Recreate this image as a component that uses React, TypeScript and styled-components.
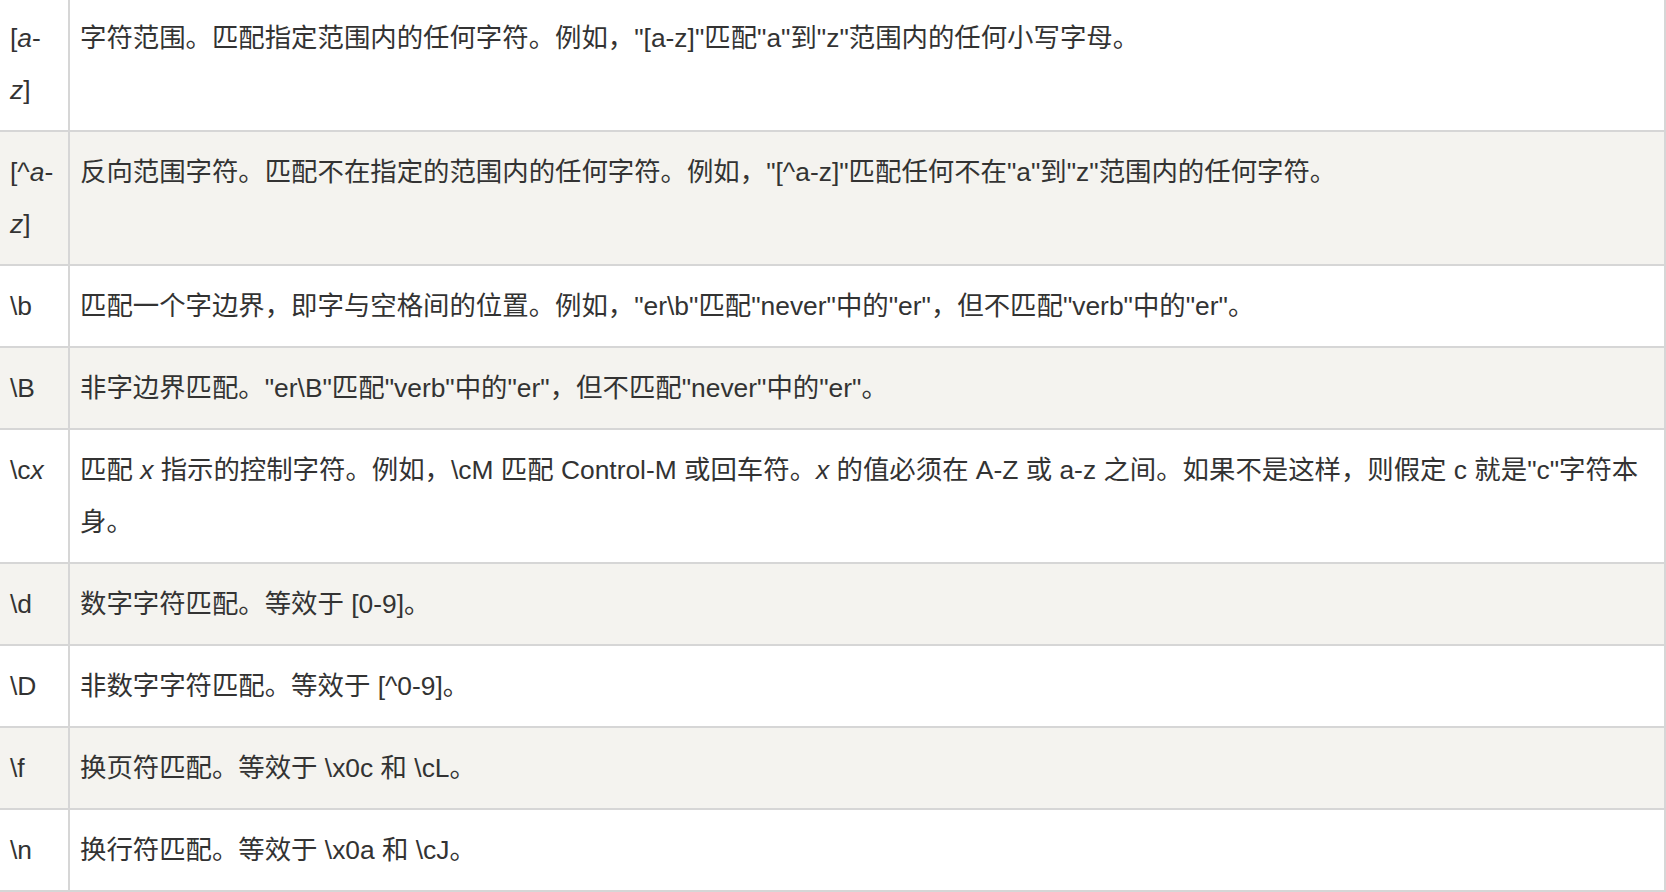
import React from 'react';
import styled, { createGlobalStyle } from 'styled-components';

const GlobalStyle = createGlobalStyle`
    html, body {
        margin: 0;
        padding: 0;
        background: #fff;
    }
`;

// page is scrolled a little: the first row's top edge sits just above the view
const Table = styled.table`
    width: 1666px;
    margin-top: -2px;
    border-collapse: separate;
    border-spacing: 0;
    table-layout: fixed;
    font-family: "Liberation Sans", "Noto Sans CJK SC", sans-serif;
    font-size: 26.4px;
    line-height: 52px;
    color: #333;
`;

const Row = styled.tr<{ $striped: boolean }>`
    background-color: ${props => (props.$striped ? '#f4f3ef' : '#fff')};
`;

const Cell = styled.td`
    padding: 14px 10px;
    vertical-align: top;
    border-right: 2px solid #d6d6d6;
    border-bottom: 2px solid #d6d6d6;
    word-wrap: break-word;
`;

const KeyCell = styled(Cell)`
    width: 48px;
`;

interface IEntry {
    key: React.ReactNode;
    desc: React.ReactNode;
}

const entries: IEntry[] = [
    {
        key: <>[<i>a</i>-<i>z</i>]</>,
        desc: '字符范围。匹配指定范围内的任何字符。例如，"[a-z]"匹配"a"到"z"范围内的任何小写字母。',
    },
    {
        key: <>[^<i>a</i>-<i>z</i>]</>,
        desc: '反向范围字符。匹配不在指定的范围内的任何字符。例如，"[^a-z]"匹配任何不在"a"到"z"范围内的任何字符。',
    },
    {
        key: '\\b',
        desc: '匹配一个字边界，即字与空格间的位置。例如，"er\\b"匹配"never"中的"er"，但不匹配"verb"中的"er"。',
    },
    {
        key: '\\B',
        desc: '非字边界匹配。"er\\B"匹配"verb"中的"er"，但不匹配"never"中的"er"。',
    },
    {
        key: <>\c<i>x</i></>,
        desc: (
            <>
                匹配 <i>x</i> 指示的控制字符。例如，\cM 匹配 Control-M 或回车符。<i>x</i> 的值必须在 A-Z 或 a-z 之间。如果不是这样，则假定 c 就是"c"字符本身。
            </>
        ),
    },
    { key: '\\d', desc: '数字字符匹配。等效于 [0-9]。' },
    { key: '\\D', desc: '非数字字符匹配。等效于 [^0-9]。' },
    { key: '\\f', desc: '换页符匹配。等效于 \\x0c 和 \\cL。' },
    { key: '\\n', desc: '换行符匹配。等效于 \\x0a 和 \\cJ。' },
];

function App() {
    return (
        <>
            <GlobalStyle />
            <Table>
                <tbody>
                    {entries.map((entry, i) => (
                        <Row key={i} $striped={i % 2 === 1}>
                            <KeyCell>{entry.key}</KeyCell>
                            <Cell>{entry.desc}</Cell>
                        </Row>
                    ))}
                </tbody>
            </Table>
        </>
    );
}

export default App;
